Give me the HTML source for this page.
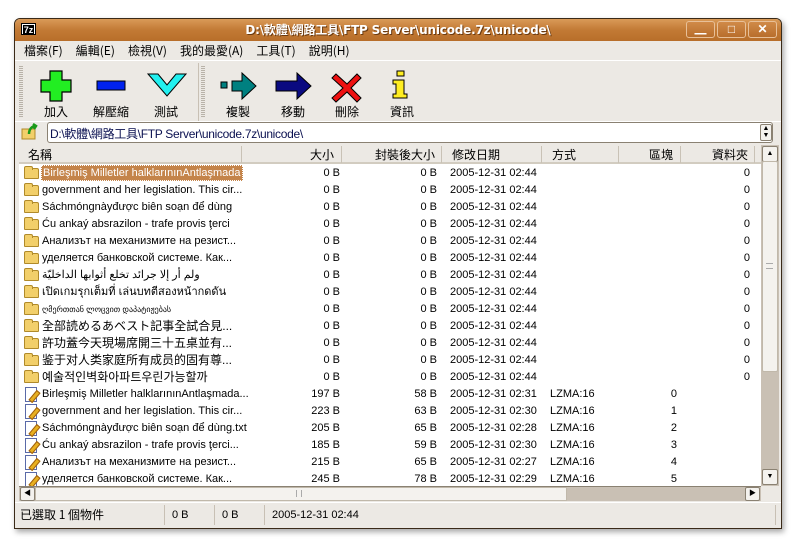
<!DOCTYPE html>
<html><head><meta charset="utf-8"><style>
*{margin:0;padding:0;box-sizing:border-box}
body{width:796px;height:543px;background:#fff;position:relative;overflow:hidden;font-family:"Liberation Sans","Noto Sans CJK TC",sans-serif;font-size:11px;color:#000}
.a{position:absolute}
.win{left:14px;top:18px;width:768px;height:511px;background:#ECE9E4;border:1px solid #3a2a18;border-radius:6px 6px 0 0;box-shadow:2px 3px 6px rgba(0,0,0,.35)}
.title{left:15px;top:19px;width:766px;height:22px;background:linear-gradient(#d99a58,#c27a35 50%,#b86e2a);border-radius:5px 5px 0 0}
.tt{left:0;width:796px;top:21px;text-align:center;color:#fff;font-weight:bold;font-size:12px;text-shadow:1px 1px 0 #6a3a10;font-family:"DejaVu Sans","Noto Sans CJK TC",sans-serif;letter-spacing:-.2px}
.btn{top:21px;width:29px;height:17px;border:1px solid #e8c098;border-radius:3px;background:linear-gradient(#d08a48,#b86e2c);color:#fff;font-weight:bold;text-align:center;font-size:12px;line-height:15px}
.menu span{margin-right:13px}
.lbl{top:103px;font-size:12px;text-align:center;width:50px;font-family:"Noto Sans CJK TC",sans-serif}
.row{position:absolute;left:20px;width:741px;height:17px;font-size:11px;line-height:17px}
.row div{position:absolute;top:0;white-space:nowrap}
.nm{left:22px}
.sz{right:421px;text-align:right}
.pk{right:324px}
.dt{left:430px}
.me{left:530px}
.bl{right:84px}
.fo{right:11px}
.hd div{position:absolute;top:0;height:17px;border-right:1px solid #c9c2b6;line-height:17px;font-family:"Noto Sans CJK TC",sans-serif;font-size:12px}
.fold{position:absolute;left:4px;top:3px;width:15px;height:11px;background:#f2cf6a;border:1px solid #b08a2a;border-radius:2px 2px 1px 1px}
.fold:before{content:"";position:absolute;left:-1px;top:-3px;width:7px;height:3px;background:#f2cf6a;border:1px solid #b08a2a;border-bottom:none;border-radius:2px 2px 0 0}
.doc{position:absolute;left:5px;top:1px;width:12px;height:15px;background:#fff;border:1px solid #5a6aa8}
.doc:after{content:"";position:absolute;left:2px;top:6px;width:11px;height:3px;background:#e8b020;transform:rotate(-50deg);border:1px solid #a06010}
.grip{width:4px;height:52px;background:repeating-linear-gradient(#b8b2a8 0 1px,transparent 1px 2px)}
</style></head><body>
<div class="a win"></div>
<div class="a title"></div>
<div class="a" style="left:21px;top:23px;width:15px;height:12px;background:#fff;border:1px solid #000;font-size:9px;font-weight:bold;line-height:10px;text-align:center;color:#000"><span style="background:#000;color:#fff;display:block;margin:1px">7z</span></div>
<div class="a tt">D:\軟體\網路工具\FTP Server\unicode.7z\unicode\</div>
<div class="a btn" style="left:686px">▁</div>
<div class="a btn" style="left:717px">□</div>
<div class="a btn" style="left:748px">✕</div>
<div class="a menu" style="left:24px;top:42px;font-size:12px;font-family:'Noto Sans CJK TC',sans-serif"><span>檔案(F)</span><span>編輯(E)</span><span>檢視(V)</span><span>我的最愛(A)</span><span>工具(T)</span><span>說明(H)</span></div>
<div class="a" style="left:15px;top:60px;width:766px;height:1px;background:#fff"></div>
<div class="a grip" style="left:19px;top:66px"></div>
<div class="a grip" style="left:201px;top:66px"></div>
<div class="a" style="left:198px;top:63px;width:1px;height:58px;background:#c8c0b4"></div>
<svg class="a" style="left:0;top:0" width="420" height="110">
<path d="M50 71h12v9h9v12h-9v9h-12v-9h-9v-12h9z" fill="#22ee22" stroke="#000" stroke-width="1.2"/>
<rect x="97" y="81" width="28" height="9" fill="#0022ee" stroke="#000"/>
<path d="M148 74h10l9 11 9-11h10l-19 22z" fill="#22f0f0" stroke="#000"/>
<rect x="221" y="82" width="6" height="6" fill="#008080" stroke="#000"/>
<path d="M232 81h10v-8l14 13-14 13v-8h-10z" fill="#008080" stroke="#000"/>
<path d="M276 81h21v-8l14 13-14 13v-8h-21z" fill="#0a0a80" stroke="#000"/>
<path d="M336 74l11 10 10-10 4 4-10 10 10 10-4 4-10-10-11 10-4-4 11-10-11-10z" fill="#ee1111" stroke="#000"/>
<rect x="397" y="71" width="7" height="5" fill="#ffee22" stroke="#000"/>
<path d="M393 80h11v14h3v4h-14v-4h3v-10h-3z" fill="#ffee22" stroke="#000"/>
</svg>
<div class="a lbl" style="left:31px">加入</div>
<div class="a lbl" style="left:86px">解壓縮</div>
<div class="a lbl" style="left:141px">測試</div>
<div class="a lbl" style="left:213px">複製</div>
<div class="a lbl" style="left:268px">移動</div>
<div class="a lbl" style="left:322px">刪除</div>
<div class="a lbl" style="left:377px">資訊</div>
<div class="a" style="left:15px;top:121px;width:766px;height:1px;background:#fff"></div>
<svg class="a" style="left:21px;top:123px" width="18" height="18"><rect x="1" y="6" width="13" height="10" fill="#f2cf6a" stroke="#b08a2a"/><path d="M8 11c0-5 3-8 7-8M12 1l3 2-2 3" stroke="#1a9a1a" stroke-width="2.5" fill="none"/></svg>
<div class="a" style="left:47px;top:122px;width:726px;height:21px;background:#fff;border:1px solid #8a8172;border-radius:3px"></div>
<div class="a" style="left:50px;top:125px;font-size:12px;color:#0a1050;font-family:'Liberation Sans','Noto Sans CJK TC',sans-serif;letter-spacing:-.3px">D:\軟體\網路工具\FTP Server\unicode.7z\unicode\</div>
<div class="a" style="left:760px;top:124px;width:12px;height:17px;border:1px solid #8a8172;border-radius:2px;font-size:7px;text-align:center;line-height:7px;background:#f4f2ee">▲<br>▼</div>
<div class="a" style="left:19px;top:144px;width:742px;height:20px;background:#ECE9E4;border-bottom:2px solid #d2ccc0"></div>
<div class="a hd" style="left:20px;top:146px;width:741px;height:17px">
<div style="left:0;width:222px;padding-left:8px">名稱</div>
<div style="left:222px;width:100px;text-align:right;padding-right:7px">大小</div>
<div style="left:322px;width:100px;text-align:right;padding-right:6px">封裝後大小</div>
<div style="left:422px;width:100px;padding-left:10px">修改日期</div>
<div style="left:522px;width:77px;padding-left:10px">方式</div>
<div style="left:599px;width:62px;text-align:right;padding-right:7px">區塊</div>
<div style="left:661px;width:74px;text-align:right;padding-right:6px">資料夾</div>
</div>
<div class="a" style="left:19px;top:164px;width:742px;height:322px;background:#fff;overflow:hidden"></div>
<div class="a" style="left:19px;top:164px;width:742px;height:322px;overflow:hidden">
<div class="row" style="top:1px;left:1px"><span class="fold"></span><div class="nm" style="background:#c4844a;color:#fff;left:21px;width:202px;padding-left:1px;border:1px dotted #fff;height:16px;line-height:15px;overflow:hidden">Birleşmiş Milletler halklarınınAntlaşmada</div><div class="sz">0 B</div><div class="pk">0 B</div><div class="dt">2005-12-31 02:44</div><div class="fo">0</div></div>
<div class="row" style="top:18px;left:1px"><span class="fold"></span><div class="nm">government and her legislation. This cir...</div><div class="sz">0 B</div><div class="pk">0 B</div><div class="dt">2005-12-31 02:44</div><div class="fo">0</div></div>
<div class="row" style="top:35px;left:1px"><span class="fold"></span><div class="nm">Sáchmóngnàyđược biên soạn để dùng</div><div class="sz">0 B</div><div class="pk">0 B</div><div class="dt">2005-12-31 02:44</div><div class="fo">0</div></div>
<div class="row" style="top:52px;left:1px"><span class="fold"></span><div class="nm">Ću ankaý absrazilon - trafe provis ţerci</div><div class="sz">0 B</div><div class="pk">0 B</div><div class="dt">2005-12-31 02:44</div><div class="fo">0</div></div>
<div class="row" style="top:69px;left:1px"><span class="fold"></span><div class="nm">Анализът на механизмите на резист...</div><div class="sz">0 B</div><div class="pk">0 B</div><div class="dt">2005-12-31 02:44</div><div class="fo">0</div></div>
<div class="row" style="top:86px;left:1px"><span class="fold"></span><div class="nm">уделяется банковской системе.  Как...</div><div class="sz">0 B</div><div class="pk">0 B</div><div class="dt">2005-12-31 02:44</div><div class="fo">0</div></div>
<div class="row" style="top:103px;left:1px"><span class="fold"></span><div class="nm">ولم أر إلا جرائد تخلع أثوابها الداخليّة</div><div class="sz">0 B</div><div class="pk">0 B</div><div class="dt">2005-12-31 02:44</div><div class="fo">0</div></div>
<div class="row" style="top:120px;left:1px"><span class="fold"></span><div class="nm">เปิดเกมรุกเต็มที่ เล่นบทตีสองหน้ากดดัน</div><div class="sz">0 B</div><div class="pk">0 B</div><div class="dt">2005-12-31 02:44</div><div class="fo">0</div></div>
<div class="row" style="top:137px;left:1px"><span class="fold"></span><div class="nm" style="font-size:8px">ღმერთთან ლოცვით დაპატიჟებას</div><div class="sz">0 B</div><div class="pk">0 B</div><div class="dt">2005-12-31 02:44</div><div class="fo">0</div></div>
<div class="row" style="top:154px;left:1px"><span class="fold"></span><div class="nm" style="font-size:12px">全部読めるあベスト記事全試合見...</div><div class="sz">0 B</div><div class="pk">0 B</div><div class="dt">2005-12-31 02:44</div><div class="fo">0</div></div>
<div class="row" style="top:171px;left:1px"><span class="fold"></span><div class="nm" style="font-size:12px">許功蓋今天現場席開三十五桌並有...</div><div class="sz">0 B</div><div class="pk">0 B</div><div class="dt">2005-12-31 02:44</div><div class="fo">0</div></div>
<div class="row" style="top:188px;left:1px"><span class="fold"></span><div class="nm" style="font-size:12px">鉴于对人类家庭所有成员的固有尊...</div><div class="sz">0 B</div><div class="pk">0 B</div><div class="dt">2005-12-31 02:44</div><div class="fo">0</div></div>
<div class="row" style="top:205px;left:1px"><span class="fold"></span><div class="nm" style="font-size:12px">예술적인벽화아파트우린가능할까</div><div class="sz">0 B</div><div class="pk">0 B</div><div class="dt">2005-12-31 02:44</div><div class="fo">0</div></div>
<div class="row" style="top:222px;left:1px"><span class="doc"></span><div class="nm">Birleşmiş Milletler halklarınınAntlaşmada...</div><div class="sz">197 B</div><div class="pk">58 B</div><div class="dt">2005-12-31 02:31</div><div class="me">LZMA:16</div><div class="bl">0</div></div>
<div class="row" style="top:239px;left:1px"><span class="doc"></span><div class="nm">government and her legislation. This cir...</div><div class="sz">223 B</div><div class="pk">63 B</div><div class="dt">2005-12-31 02:30</div><div class="me">LZMA:16</div><div class="bl">1</div></div>
<div class="row" style="top:256px;left:1px"><span class="doc"></span><div class="nm">Sáchmóngnàyđược biên soạn để dùng.txt</div><div class="sz">205 B</div><div class="pk">65 B</div><div class="dt">2005-12-31 02:28</div><div class="me">LZMA:16</div><div class="bl">2</div></div>
<div class="row" style="top:273px;left:1px"><span class="doc"></span><div class="nm">Ću ankaý absrazilon - trafe provis ţerci...</div><div class="sz">185 B</div><div class="pk">59 B</div><div class="dt">2005-12-31 02:30</div><div class="me">LZMA:16</div><div class="bl">3</div></div>
<div class="row" style="top:290px;left:1px"><span class="doc"></span><div class="nm">Анализът на механизмите на резист...</div><div class="sz">215 B</div><div class="pk">65 B</div><div class="dt">2005-12-31 02:27</div><div class="me">LZMA:16</div><div class="bl">4</div></div>
<div class="row" style="top:307px;left:1px"><span class="doc"></span><div class="nm">уделяется банковской системе.  Как...</div><div class="sz">245 B</div><div class="pk">78 B</div><div class="dt">2005-12-31 02:29</div><div class="me">LZMA:16</div><div class="bl">5</div></div>
</div>
<div class="a" style="left:761px;top:145px;width:18px;height:341px;background:#C9C0B4"></div>
<div class="a" style="left:762px;top:146px;width:16px;height:16px;background:#f4f2ee;border:1px solid #8a8172;border-radius:2px;font-size:7px;text-align:center;line-height:13px">▲</div>
<div class="a" style="left:762px;top:161px;width:16px;height:211px;background:#F4F2EE;border:1px solid #c0b8aa;border-radius:2px"></div>
<div class="a" style="left:766px;top:263px;width:7px;height:6px;border-top:1px solid #aaa;border-bottom:1px solid #aaa"></div>
<div class="a" style="left:762px;top:469px;width:16px;height:16px;background:#f4f2ee;border:1px solid #8a8172;border-radius:2px;font-size:7px;text-align:center;line-height:13px">▼</div>
<div class="a" style="left:19px;top:486px;width:742px;height:15px;background:#C9C0B4;border-top:1px solid #8a8172"></div>
<div class="a" style="left:20px;top:487px;width:15px;height:14px;background:#f4f2ee;border:1px solid #8a8172;border-radius:2px;font-size:7px;line-height:12px;text-align:center">◀</div>
<div class="a" style="left:35px;top:487px;width:532px;height:14px;background:#F4F2EE;border:1px solid #c0b8aa"></div>
<div class="a" style="left:296px;top:490px;width:6px;height:7px;border-left:1px solid #aaa;border-right:1px solid #aaa"></div>
<div class="a" style="left:745px;top:487px;width:15px;height:14px;background:#f4f2ee;border:1px solid #8a8172;border-radius:2px;font-size:7px;line-height:12px;text-align:center">▶</div>
<div class="a" style="left:15px;top:502px;width:766px;height:1px;background:#fff"></div>
<div class="a" style="left:20px;top:507px;font-family:'Noto Sans CJK TC',sans-serif;font-size:12px;line-height:16px">已選取 1 個物件</div>
<div class="a" style="left:164px;top:505px;width:1px;height:20px;background:#c8c0b4"></div>
<div class="a" style="left:172px;top:509px">0 B</div>
<div class="a" style="left:214px;top:505px;width:1px;height:20px;background:#c8c0b4"></div>
<div class="a" style="left:222px;top:509px">0 B</div>
<div class="a" style="left:264px;top:505px;width:1px;height:20px;background:#c8c0b4"></div>
<div class="a" style="left:272px;top:509px">2005-12-31 02:44</div>
<div class="a" style="left:775px;top:505px;width:1px;height:20px;background:#c8c0b4"></div>
</body></html>
